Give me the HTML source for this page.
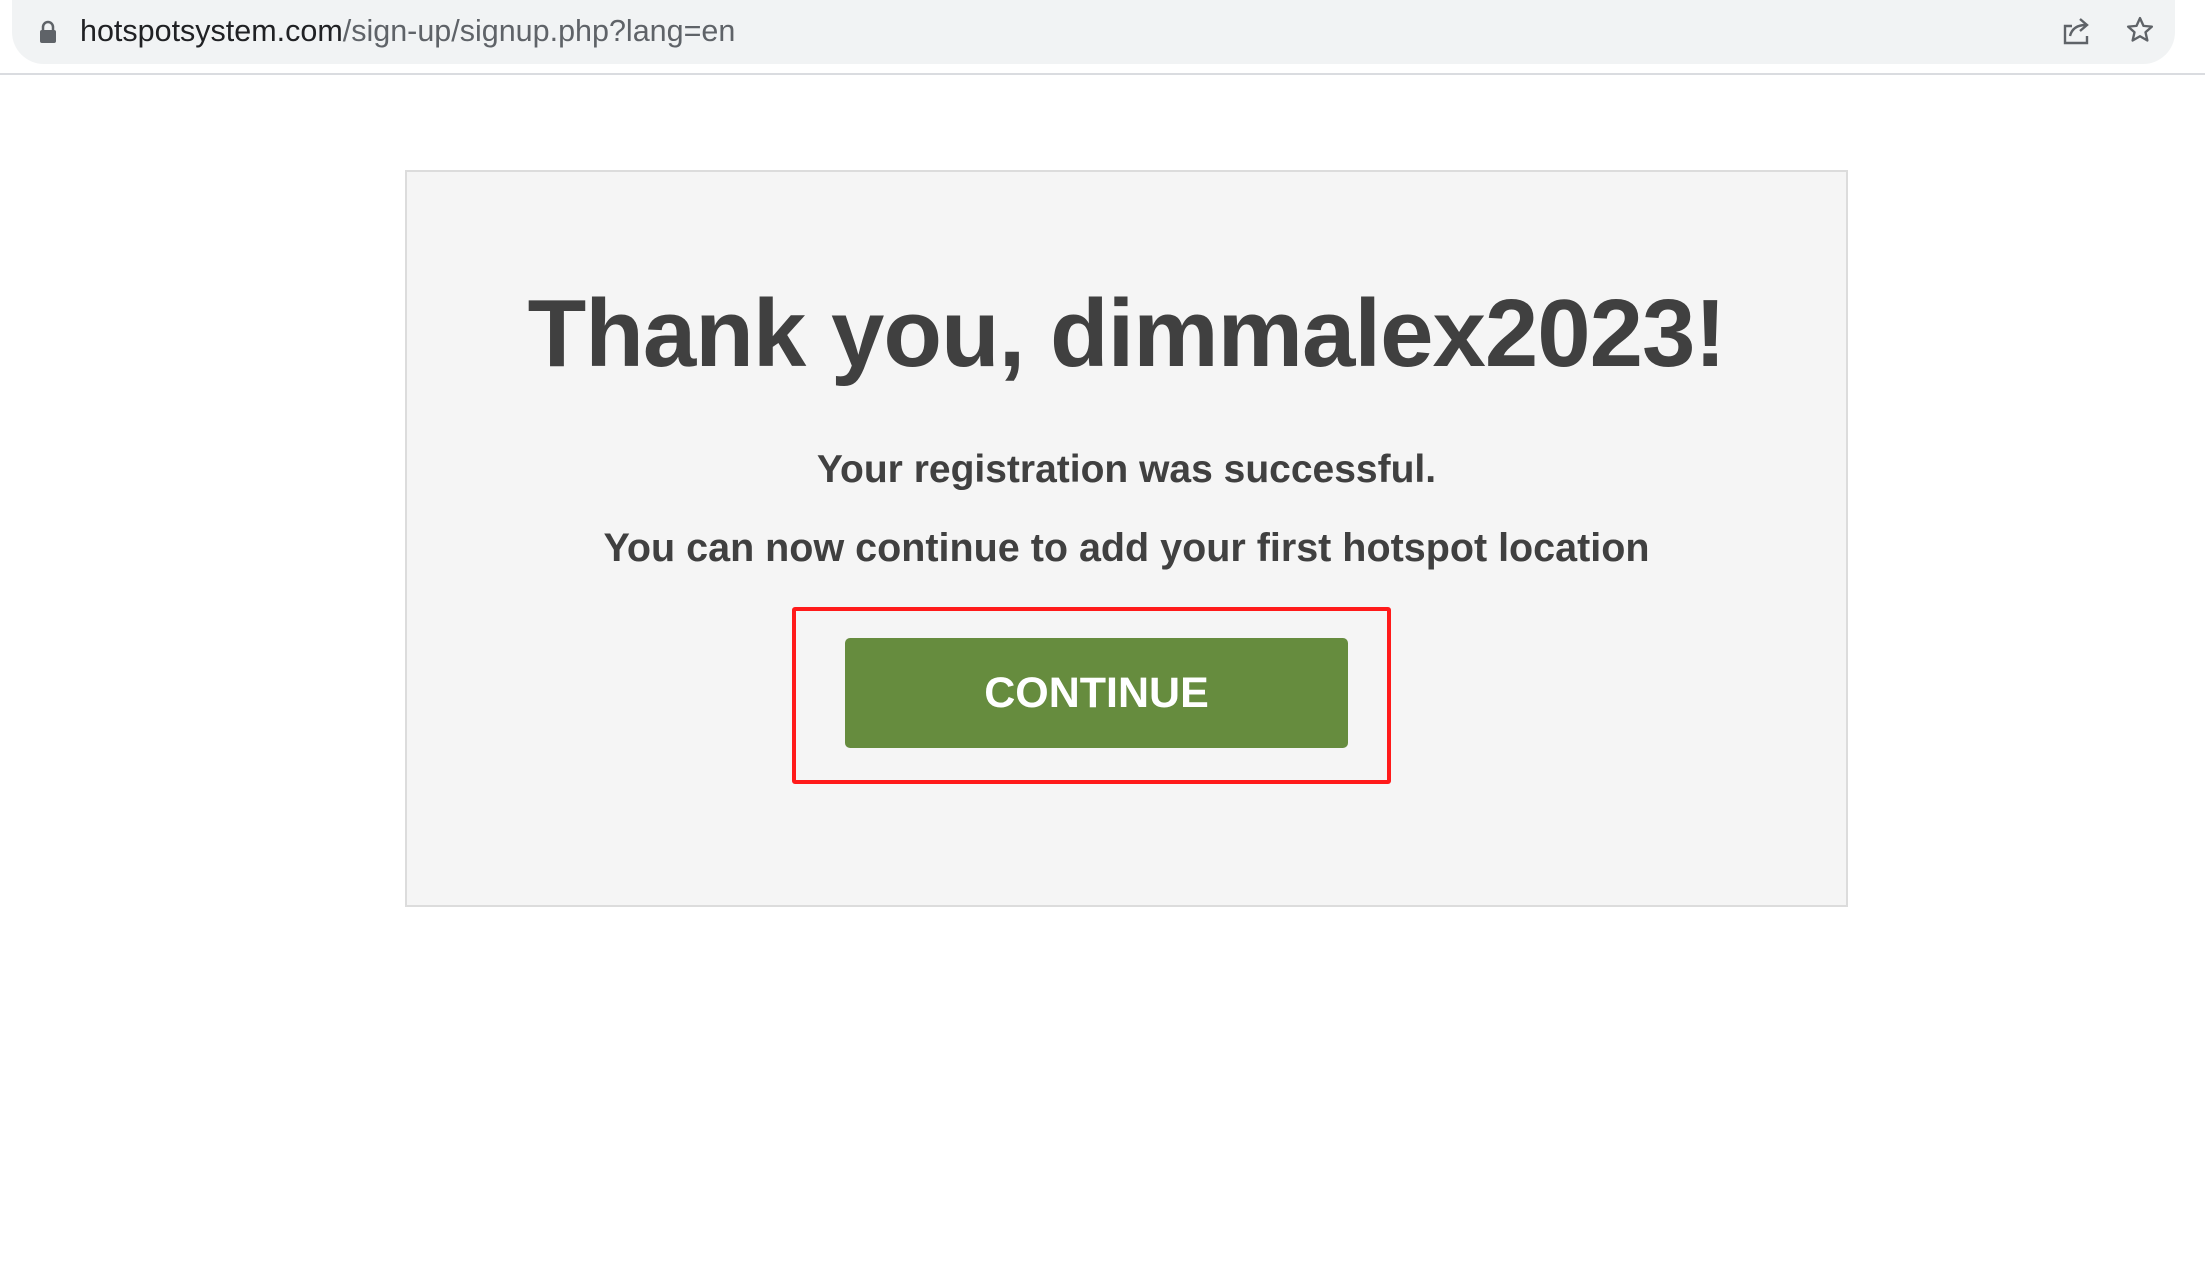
<!DOCTYPE html>
<html><head><meta charset="utf-8"><style>
*{margin:0;padding:0;box-sizing:border-box}
body{width:2205px;height:1269px;background:#fff;position:relative;overflow:hidden;font-family:"Liberation Sans",sans-serif}
.bar{position:absolute;left:12px;top:0;width:2163px;height:64px;background:#f1f3f4;border-radius:0 0 32px 32px}
.line{position:absolute;left:0;top:73px;width:2205px;height:2px;background:#dadce0}
.url{position:absolute;left:80px;top:12px;font-size:30.5px;color:#202124;line-height:38px}
.url span{color:#5f6368}
.card{position:absolute;left:405px;top:170px;width:1443px;height:737px;background:#f5f5f5;border:2px solid #dcdcdc}
.h{position:absolute;left:405px;width:1443px;text-align:center;color:#404040;font-weight:bold}
.btn{position:absolute;left:845px;top:638px;width:503px;height:110px;background:#668c3e;border-radius:5px;color:#fff;font-weight:bold;font-size:43px;text-align:center;line-height:110px}
.red{position:absolute;left:792px;top:607px;width:599px;height:177px;border:4px solid #ff1a1a;border-radius:3px}
</style></head><body>
<div class="bar"></div>
<svg style="position:absolute;left:38px;top:20px" width="20" height="24" viewBox="0 0 20 24"><path d="M5 10V7a5 5 0 0 1 10 0v3" fill="none" stroke="#5f6368" stroke-width="2.5"/><rect x="2" y="10" width="16" height="13" rx="2" fill="#5f6368"/></svg>
<div class="url">hotspotsystem.com<span>/sign-up/signup.php?lang=en</span></div>
<svg style="position:absolute;left:2060px;top:16px" width="32" height="30" viewBox="0 0 32 30"><path d="M12 10H5v17h22v-7" fill="none" stroke="#5f6368" stroke-width="2.4"/><path d="M10 20c2-8 8-11 16-11M20 3l7 6-7 6" fill="none" stroke="#5f6368" stroke-width="2.4"/></svg>
<svg style="position:absolute;left:2125px;top:15px" width="30" height="30" viewBox="0 0 24 24"><path d="M12 2.5l2.8 6.2 6.7.6-5.1 4.5 1.5 6.6L12 17l-5.9 3.4 1.5-6.6-5.1-4.5 6.7-.6z" fill="none" stroke="#5f6368" stroke-width="1.9" stroke-linejoin="round"/></svg>
<div class="line"></div>
<div class="card"></div>
<div class="h" style="top:271px;font-size:96px;line-height:125px;letter-spacing:-1px">Thank you, dimmalex2023!</div>
<div class="h" style="top:447px;font-size:39px;line-height:46px">Your registration was successful.</div>
<div class="h" style="top:525px;font-size:39.5px;line-height:46px">You can now continue to add your first hotspot location</div>
<div class="red"></div>
<div class="btn">CONTINUE</div>
</body></html>
